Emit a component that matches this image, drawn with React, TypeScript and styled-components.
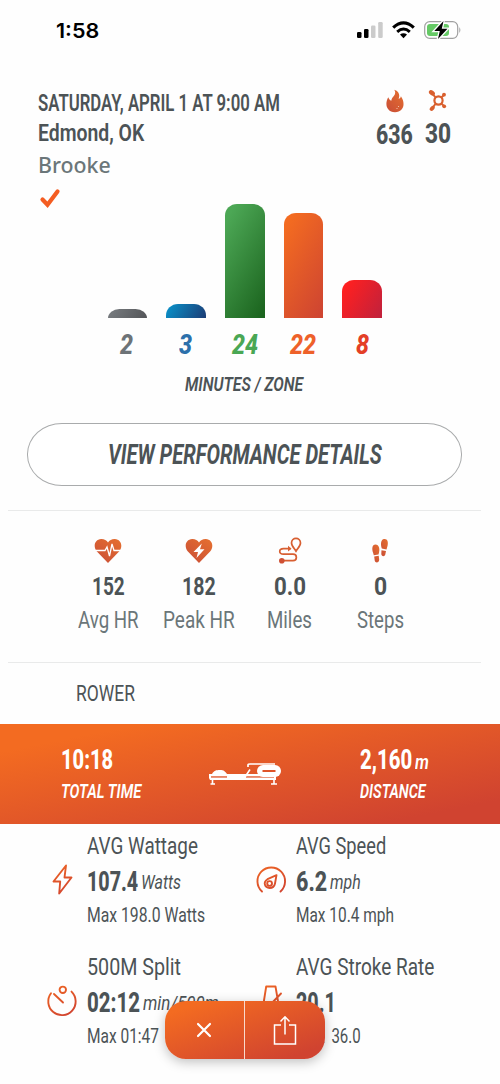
import React, { useLayoutEffect, useRef, useState } from 'react';
import styled, { createGlobalStyle } from 'styled-components';

const GlobalStyle = createGlobalStyle`
  * { box-sizing: border-box; }
  html, body { margin: 0; background: #fefefe; }
  body { width: 500px; height: 1084px; overflow: hidden; }
`;

const ink = '#4c5356';
const muted = '#6b7679';

/* Condensed text: a line of Roboto narrowed to the column width it is given. */
const Line = styled.div<{ $w: number; $h: number; $size: number; $weight: number; $italic?: boolean; $color: string; $font?: string; $gap?: number }>`
  flex: none;
  width: ${p => p.$w}px;
  height: ${p => p.$h}px;
  line-height: ${p => p.$h}px;
  font-family: ${p => p.$font || 'Roboto, "Liberation Sans", sans-serif'};
  font-size: ${p => p.$size}px;
  font-weight: ${p => p.$weight};
  font-style: ${p => (p.$italic ? 'italic' : 'normal')};
  word-spacing: ${p => p.$gap || 0}px;
  color: ${p => p.$color};
  white-space: nowrap;
`;
const Glyphs = styled.span`
  display: inline-block;
  vertical-align: top;
  transform-origin: 0 50%;
`;

type TextProps = { children: string; w: number; h: number; size: number; weight?: number; italic?: boolean; color?: string; font?: string; gap?: number };
function Condensed({ children, w, h, size, weight = 400, italic, color = ink, font, gap }: TextProps) {
  const ref = useRef<HTMLSpanElement>(null);
  const [ratio, setRatio] = useState(1);
  useLayoutEffect(() => {
    if (ref.current) setRatio(w / ref.current.offsetWidth);
  }, [w, children]);
  return (
    <Line $w={w} $h={h} $size={size} $weight={weight} $italic={italic} $color={color} $font={font} $gap={gap}>
      <Glyphs ref={ref} style={{ transform: `scaleX(${ratio})` }}>{children}</Glyphs>
    </Line>
  );
}

const Page = styled.main`
  width: 500px;
  height: 1084px;
  display: flex;
  flex-direction: column;
  overflow: hidden;
  background: #fefefe;
`;
const StatusBar = styled.div`
  height: 88px;
  padding: 15px 38px 0 56px;
  display: flex;
  justify-content: space-between;
  align-items: flex-start;
`;
const StatusIcons = styled.svg`
  width: 106px;
  height: 20px;
  margin-top: 5px;
`;
const Header = styled.header`
  height: 116px;
  padding: 0 49px 0 38px;
  display: flex;
  justify-content: space-between;
`;
const CheckRow = styled.div`
  height: 21px;
  padding: 5px 0 0 1px;
`;
const Totals = styled.div`
  display: flex;
  gap: 12px;
`;
const Total = styled.div<{ $drop: number }>`
  display: flex;
  flex-direction: column;
  align-items: center;
  gap: ${p => p.$drop}px;
`;
const Chart = styled.section`
  height: 114px;
  padding: 0 118px 0 107.6px;
  display: flex;
  justify-content: space-between;
  align-items: flex-end;
`;
const Bar = styled.div<{ $h: number; $from: string; $to: string }>`
  width: 39.5px;
  height: ${p => p.$h}px;
  border-radius: 12px 12px 0 0 / ${p => Math.min(11.5, p.$h)}px ${p => Math.min(11.5, p.$h)}px 0 0;
  background: linear-gradient(120deg, ${p => p.$from} 10%, ${p => p.$to} 95%);
`;
const ZoneCounts = styled.div`
  height: 52px;
  padding: 11px 118px 0 107px;
  display: flex;
  justify-content: space-between;
`;
const Count = styled.div`
  width: 39.5px;
  display: flex;
  justify-content: center;
`;
const Caption = styled.div`
  height: 53px;
  padding-left: 185px;
`;
const DetailsButton = styled.button`
  flex: none;
  width: 435px;
  height: 63px;
  margin: 0 0 24px 27px;
  padding: 0;
  border: 1px solid #a9abac;
  border-radius: 35px / 31px;
  background: #fff;
  display: flex;
  align-items: center;
  justify-content: center;
`;
const Divider = styled.div`
  flex: none;
  width: 473px;
  height: 1px;
  margin-left: 8px;
  background: #e9eaea;
`;
const Stats = styled.section`
  height: 151px;
  padding: 25px 0 0 63px;
  display: flex;
`;
const Stat = styled.div`
  width: 90.7px;
  display: flex;
  flex-direction: column;
  align-items: center;
`;
const StatIcon = styled.svg`
  width: 30px;
  height: 29px;
  margin-bottom: 4px;
`;
const SectionTitle = styled.div`
  height: 61px;
  padding: 14px 0 0 76px;
`;
const Banner = styled.section`
  height: 100px;
  flex: none;
  padding: 21px 0 0 61px;
  display: flex;
  background: linear-gradient(to bottom right, #f36b21 14%, #d04330 88%);
`;
const RowerIcon = styled.svg`
  width: 74px;
  height: 24px;
  margin: 17px 78px 0 67px;
`;
const ValueRow = styled.div<{ $gap: number }>`
  display: flex;
  gap: ${p => p.$gap}px;
`;
const Metrics = styled.section`
  display: grid;
  grid-template-columns: 209px 209px;
  grid-auto-rows: 121px;
  padding: 6px 0 0 43px;
`;
const Metric = styled.div`
  display: flex;
`;
const MetricIcon = styled.svg`
  flex: none;
  width: 38px;
  height: 36px;
  margin: 31px 6px 0 0;
`;
const FloatingBar = styled.nav`
  position: absolute;
  left: 164.5px;
  top: 1001px;
  width: 160.5px;
  height: 58px;
  border-radius: 21px;
  display: flex;
  overflow: hidden;
  background: linear-gradient(to bottom right, #f36b21 12%, #d04330 88%);
`;
const FloatingShadow = styled.div`
  position: absolute;
  left: 165px;
  top: 1001px;
  width: 160px;
  height: 58px;
  border-radius: 21px;
  box-shadow: 0 3px 12px rgba(0, 0, 0, 0.25);
`;
const Action = styled.button`
  flex: 1;
  padding: 0;
  border: 0;
  background: transparent;
  display: flex;
  align-items: center;
  justify-content: center;
  & + & { border-left: 1.5px solid #f9dacd; }
`;

const Gradients = () => (
  <svg width="0" height="0" style={{ display: 'block' }}>
    <defs>
      <linearGradient id="warm" x1="1" y1="0" x2="0.2" y2="1">
        <stop offset="0" stopColor="#e6702f" />
        <stop offset="1" stopColor="#cb5036" />
      </linearGradient>
      <linearGradient id="line" gradientUnits="userSpaceOnUse" x1="0" y1="2" x2="20" y2="36">
        <stop offset="0" stopColor="#f36b21" />
        <stop offset="1" stopColor="#d24530" />
      </linearGradient>
    </defs>
  </svg>
);

const heart = 'M15 27 L3.9 15.6 C-0.2 11 1.5 3.2 8.2 3 C11.2 2.9 13.6 4.3 15 6.4 C16.4 4.3 18.8 2.9 21.8 3 C28.5 3.2 30.2 11 26.1 15.6 Z';

const bars = [
  { h: 9.5, from: '#75797d', to: '#55575a', n: '2', w: 13, color: '#6d7377' },
  { h: 14.3, from: '#0a8cc4', to: '#1b4079', n: '3', w: 13, color: '#2c70ab' },
  { h: 114.3, from: '#4ca755', to: '#1c651f', n: '24', w: 26, color: '#4aa754' },
  { h: 105, from: '#f36b21', to: '#cf4531', n: '22', w: 26, color: '#ee612a' },
  { h: 38.3, from: '#ff2020', to: '#c3213b', n: '8', w: 13, color: '#e43f27' },
];

type MetricData = { title: string; tw: number; value: string; vw: number; unit?: string; uw?: number; max: string; mw: number; gap?: number; icon: React.ReactNode };
const metrics: MetricData[] = [
  {
    title: 'AVG Wattage', tw: 111, value: '107.4', vw: 51, unit: 'Watts', uw: 40, max: 'Max 198.0 Watts', mw: 118,
    icon: <path d="M23 4.5 L10.5 20.5 L17.2 20.5 L16.2 32.5 L28.5 16.5 L21.5 16.5 Z" />,
  },
  {
    title: 'AVG Speed', tw: 90, value: '6.2', vw: 31, unit: 'mph', uw: 31, max: 'Max 10.4 mph', mw: 98,
    icon: (
      <>
        <path d="M10 30.5 A13.8 13.8 0 1 1 28.5 30.5" />
        <path d="M24.5 14.2 L15.5 18.2 C10.5 21.5 13 27 17.5 27 C21 27 22.5 25 23 22.5 Z" />
        <circle cx="17.6" cy="22.5" r="2.4" />
      </>
    ),
  },
  {
    title: '500M Split', tw: 94, value: '02:12', vw: 53, unit: 'min/500m', uw: 76, max: 'Max 01:47', mw: 72,
    icon: (
      <>
        <path d="M8 11.2 A13.7 13.7 0 1 0 28.5 9.6 M11 12 L20 20.5" />
        <circle cx="19.8" cy="7.8" r="3.2" />
      </>
    ),
  },
  {
    title: 'AVG Stroke Rate', tw: 138, value: '20.1', vw: 40, max: 'Max 36.0', mw: 64.5, gap: 4,
    icon: <path d="M10 31 L14.2 4.5 L23.5 4.5 L28 31 Z M18 23 L29 11.5" />,
  },
];

export default function App() {
  return (
    <Page>
      <GlobalStyle />
      <Gradients />
      <StatusBar>
        <Condensed w={43} h={32} size={20.5} weight={600} color="#000" font='Inter, "Liberation Sans", sans-serif'>1:58</Condensed>
        <StatusIcons viewBox="0 0 106 20">
          <rect x="1" y="12" width="4.5" height="6" rx="1.3" />
          <rect x="8" y="9" width="4.5" height="9" rx="1.3" />
          <rect x="15" y="5.5" width="4.5" height="12.5" rx="1.3" fill="#cbcbcb" />
          <rect x="22.2" y="2" width="4.5" height="16" rx="1.3" fill="#cbcbcb" />
          <path d="M37.2 7.6 Q47.5 -1.8 57.8 7.6" fill="none" stroke="#000" strokeWidth="3.2" />
          <path d="M41.2 11.8 Q47.5 6.2 53.8 11.8" fill="none" stroke="#000" strokeWidth="3" />
          <path d="M44 14.6 Q47.5 11.8 51 14.6 L47.5 18.2 Z" />
          <rect x="68.7" y="1.7" width="33" height="16.6" rx="5" fill="none" stroke="#a0a0a0" strokeWidth="1.2" />
          <rect x="71" y="4" width="22" height="12" rx="3" fill="#65c965" />
          <path d="M103.3 7 Q105.5 10 103.3 13 Z" fill="#a0a0a0" />
          <path d="M87.5 1 L78.3 11 L83.8 11 L82 19 L91.5 8.7 L85.8 8.7 Z" stroke="#fefefe" strokeWidth="2.6" paintOrder="stroke" />
        </StatusIcons>
      </StatusBar>

      <Header>
        <div>
          <Condensed w={242} h={31} size={23} weight={600}>SATURDAY, APRIL 1 AT 9:00 AM</Condensed>
          <Condensed w={106} h={28} size={24.5} weight={650}>Edmond, OK</Condensed>
          <Condensed w={73} h={36} size={22.5} weight={500} color={muted} font='"Noto Sans", sans-serif'>Brooke</Condensed>
          <CheckRow>
            <svg width="22" height="21" viewBox="0 0 22 21"><path d="M3.5 11.5 L8.5 16.8 L18.5 3.5" fill="none" stroke="#f45d22" strokeWidth="4.2" strokeLinecap="round" strokeLinejoin="miter" /></svg>
          </CheckRow>
        </div>
        <Totals>
          <Total $drop={7}>
            <svg width="20" height="26" viewBox="0 0 20 26">
              <path d="M9.3 1.8 C14.5 3.5 15 7.5 13.6 10.8 C15 10.8 15.6 9.8 15.9 8.3 C21 15.5 18.5 24.2 10 24.2 C1.2 24.2 -0.5 15.5 3.3 9.3 C4 11 4.8 12.2 6.3 12.7 C6.6 10.5 7.5 9.5 9 7.8 C10.5 6 10.6 4 9.3 1.8 Z" fill="url(#warm)" />
              <circle cx="13.5" cy="18.5" r=".6" fill="#f6cdb8" /><circle cx="12" cy="20.5" r=".6" fill="#f6cdb8" />
            </svg>
            <Condensed w={37} h={29} size={27} weight={800}>636</Condensed>
          </Total>
          <Total $drop={6}>
            <svg width="20" height="26" viewBox="0 0 20 26">
              <g fill="#d9602f">
                <ellipse cx="3.9" cy="4.8" rx="3.3" ry="2.3" transform="rotate(35 3.9 4.8)" />
                <ellipse cx="4.2" cy="20.3" rx="2.9" ry="2" transform="rotate(-45 4.2 20.3)" />
                <circle cx="16" cy="6.7" r="1.9" /><circle cx="16.2" cy="18.3" r="1.9" />
              </g>
              <circle cx="10.5" cy="12.5" r="4.1" fill="none" stroke="#d9602f" strokeWidth="2.2" />
              <path d="M3.5 4.6 L7.5 9.3 M4 20.5 L7.5 15.8 M13.3 9.5 L16 7 M13.3 15.5 L16 18" stroke="#d9602f" strokeWidth="2" />
            </svg>
            <Condensed w={26} h={29} size={27} weight={800}>30</Condensed>
          </Total>
        </Totals>
      </Header>

      <Chart>
        {bars.map(b => <Bar key={b.n} $h={b.h} $from={b.from} $to={b.to} />)}
      </Chart>
      <ZoneCounts>
        {bars.map(b => (
          <Count key={b.n}><Condensed w={b.w} h={33} size={27} weight={800} italic color={b.color}>{b.n}</Condensed></Count>
        ))}
      </ZoneCounts>
      <Caption><Condensed w={118} h={29} size={20.5} weight={650} italic>MINUTES / ZONE</Condensed></Caption>

      <DetailsButton><Condensed w={274} h={40} size={27} weight={700} italic>VIEW PERFORMANCE DETAILS</Condensed></DetailsButton>
      <Divider />

      <Stats>
        <Stat>
          <StatIcon viewBox="0 0 30 29">
            <path d={heart} fill="url(#warm)" />
            <path d="M1 14.5 H12 L14 11 L16.5 20 L19 8 L21 14.5 H29" fill="none" stroke="#fff" strokeWidth="1.3" />
          </StatIcon>
          <Condensed w={33} h={33} size={26.5} weight={700}>152</Condensed>
          <Condensed w={61} h={35} size={24.5} color={muted}>Avg HR</Condensed>
        </Stat>
        <Stat>
          <StatIcon viewBox="0 0 30 29">
            <path d={heart} fill="url(#warm)" />
            <path d="M17.8 7.5 L9.5 16 L14 16 L12.5 22 L20.5 13.3 L16 13.3 Z" fill="#fff" />
          </StatIcon>
          <Condensed w={34} h={33} size={26.5} weight={700}>182</Condensed>
          <Condensed w={72} h={35} size={24.5} color={muted}>Peak HR</Condensed>
        </Stat>
        <Stat>
          <StatIcon viewBox="0 0 30 29" fill="none" stroke="#d85f32" strokeWidth="1.7">
            <path d="M21 15.2 C18.5 11.5 16.5 9.5 16.5 7 C16.5 0.8 25.5 0.8 25.5 7 C25.5 9.5 23.5 11.5 21 15.2 Z" />
            <path d="M15.5 12.7 H8.5 C3.5 12.7 3.5 18.2 8.5 18.2 H18 C22.5 18.2 22.5 24.7 18 24.7 H7" />
            <path d="M13 9.8 L16.5 12.7 L13 15.5 Z" fill="#d85f32" stroke="none" />
            <circle cx="6.8" cy="24.7" r="2.8" fill="#cf5034" stroke="none" />
          </StatIcon>
          <Condensed w={32} h={33} size={26.5} weight={700}>0.0</Condensed>
          <Condensed w={45} h={35} size={24.5} color={muted}>Miles</Condensed>
        </Stat>
        <Stat>
          <StatIcon viewBox="0 0 30 29" fill="url(#warm)">
            <path d="M19 3 C22.5 2.5 23.5 6 22.5 10 L21.5 13.5 L16.8 12.5 C15 7 16.5 3.3 19 3 Z M16.5 14.2 L21 15 L20.3 18.5 C19.5 21.2 16.2 20.3 16.3 17.8 Z" />
            <path d="M10.5 8.5 C7 8.5 6.8 13 8 16.5 L8.8 19.2 L13.5 18.4 C15.5 13 14 8.5 10.5 8.5 Z M9.2 20.5 L13.7 19.7 L14.2 23.5 C14.3 27 10.2 27.5 9.7 24.5 Z" />
          </StatIcon>
          <Condensed w={13} h={33} size={26.5} weight={700}>0</Condensed>
          <Condensed w={47} h={35} size={24.5} color={muted}>Steps</Condensed>
        </Stat>
      </Stats>
      <Divider />

      <SectionTitle><Condensed w={59} h={32} size={22.5}>ROWER</Condensed></SectionTitle>

      <Banner>
        <div>
          <Condensed w={52} h={31} size={27} weight={800} color="#fff">10:18</Condensed>
          <Condensed w={80} h={30} size={20.5} weight={600} italic color="#fff">TOTAL TIME</Condensed>
        </div>
        <RowerIcon viewBox="0 0 74 24" fill="#fff">
          <path d="M1 12 H68 V18 H2 L1 16 Z" />
          <path d="M4 12 C6 8.5 8 8 12 8 C16 8 17 9.5 19 12 Z" />
          <rect x="3" y="14.3" width="16" height="1.3" fill="#df5429" /><rect x="38" y="14.3" width="28" height="1.3" fill="#df5429" />
          <path d="M4.5 18 V22 M66 18 V22 M2.5 22 H7 M63 22 H69 M37 15 L42 7.5" stroke="#fff" strokeWidth="1.6" fill="none" />
          <path d="M40 5 V3 Q40 2 42 2 H67" fill="none" stroke="#fff" strokeWidth="1.7" />
          <rect x="49" y="3" width="24" height="12" rx="6" /><rect x="54.5" y="8" width="13" height="2" fill="#df5429" />
        </RowerIcon>
        <div>
          <ValueRow $gap={3}>
            <Condensed w={52} h={31} size={27} weight={800} color="#fff">2,160</Condensed>
            <Condensed w={14} h={35} size={20} weight={600} italic color="#fff">m</Condensed>
          </ValueRow>
          <Condensed w={66} h={22} size={20.5} weight={600} italic color="#fff">DISTANCE</Condensed>
        </div>
      </Banner>

      <Metrics>
        {metrics.map(m => (
          <Metric key={m.title}>
            <MetricIcon viewBox="0 0 38 36" fill="none" stroke="url(#line)" strokeWidth="1.9" strokeLinecap="round" strokeLinejoin="round">{m.icon}</MetricIcon>
            <div>
              <Condensed w={m.tw} h={31} size={24.5}>{m.title}</Condensed>
              <ValueRow $gap={3}>
                <Condensed w={m.vw} h={42} size={27} weight={800}>{m.value}</Condensed>
                {m.unit && <Condensed w={m.uw || 0} h={42} size={20} italic>{m.unit}</Condensed>}
              </ValueRow>
              <Condensed w={m.mw} h={24} size={20} gap={m.gap}>{m.max}</Condensed>
            </div>
          </Metric>
        ))}
      </Metrics>

      <FloatingShadow />
      <FloatingBar>
        <Action aria-label="Close">
          <svg width="18" height="18" viewBox="0 0 18 18"><path d="M3 3 L15 15 M15 3 L3 15" stroke="#fff" strokeWidth="2.2" strokeLinecap="round" /></svg>
        </Action>
        <Action aria-label="Share">
          <svg width="26" height="32" viewBox="0 0 26 32" fill="none" stroke="#fff" strokeWidth="1.5">
            <path d="M9 11 H2.5 V30 H23.5 V11 H17 M13 20.5 V3 M8.5 7.5 L13 2.8 L17.5 7.5" />
          </svg>
        </Action>
      </FloatingBar>
    </Page>
  );
}
